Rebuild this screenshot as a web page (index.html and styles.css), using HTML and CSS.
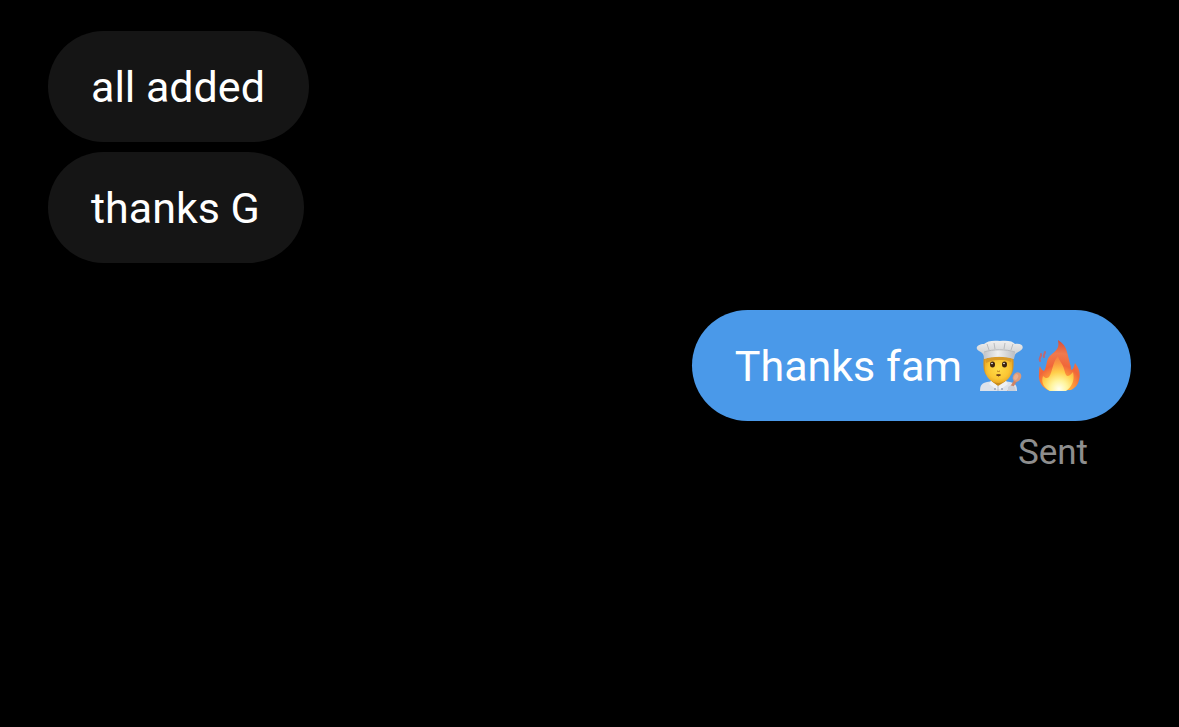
FILE: index.html
```html
<!DOCTYPE html>
<html lang="en">
<head>
<meta charset="utf-8">
<meta name="viewport" content="width=device-width, initial-scale=1">
<title>Messages</title>
<link rel="stylesheet" href="styles.css">
</head>
<body>
<main class="chat">
  <section class="group received">
    <p class="bubble">all added</p>
    <p class="bubble">thanks G</p>
  </section>
  <section class="group sent">
    <p class="bubble">
      <span>Thanks fam</span>
      <span class="emojis">
        <svg class="emoji" viewBox="0 0 48 51" role="img" aria-label="Cook">
          <defs>
            <linearGradient id="hat" x1="0" y1="0" x2="0" y2="1"><stop offset="0" stop-color="#efefef"/><stop offset=".6" stop-color="#d6d7d8"/><stop offset="1" stop-color="#b3b5b9"/></linearGradient>
            <linearGradient id="band" x1="0" y1="0" x2="1" y2="0"><stop offset="0" stop-color="#c4c5c8"/><stop offset=".45" stop-color="#f0f0f0"/><stop offset="1" stop-color="#bcbec2"/></linearGradient>
            <radialGradient id="face" cx=".5" cy=".45" r=".65"><stop offset="0" stop-color="#ffdc48"/><stop offset=".6" stop-color="#fbc633"/><stop offset="1" stop-color="#de971f"/></radialGradient>
          </defs>
          <path d="M5 51c0-6 2-8 7-9l6-1h11l6 1c5 1 7 3 7 9z" fill="#dde2ea"/>
          <path d="M17 38h13v4l-6 5-7-5z" fill="#c98c1c"/>
          <path d="M16 41l7 5 8-5 2 3-7 5h-5l-7-5z" fill="#eef1f5"/>
          <path d="M23 46v5" stroke="#b7bdc8" fill="none"/>
          <g fill="#66748f"><circle cx="20" cy="49" r=".8"/><circle cx="27" cy="49" r=".8"/></g>
          <path d="M9 16h29c1 7 1 14-2 19H11c-3-5-3-12-2-19z" fill="#dc9820"/>
          <path d="M10 17h27v12c0 8-6 14-13.500 14S10 37 10 29z" fill="url(#face)"/>
          <path d="M10 16h27l-1 6c-4-2-8-2-12-2-5 0-9 1-13 3z" fill="#d99a28"/>
          <ellipse cx="17.500" cy="24.500" rx="2.500" ry="3" fill="#3d2411"/>
          <ellipse cx="29.500" cy="24.500" rx="2.500" ry="3" fill="#3d2411"/>
          <circle cx="17" cy="23.500" r=".8" fill="#fff"/><circle cx="29" cy="23.500" r=".8" fill="#fff"/>
          <path d="M22 31q1.500 1 3 0" stroke="#b97a1c" fill="none"/>
          <path d="M21.500 35q2-1 4 0-2 2-4 0z" fill="#704018" stroke="#704018"/>
          <path d="M9 19C9 15 8 13 4 11-1 8 3 4 9 4c3-3 9-4 16-3 7-1 13 0 15 3 8-1 10 4 5 7-4 2-6 4-6 8-9-3-21-3-30 0z" fill="url(#hat)"/>
          <path d="M9 12c9-3 22-3 31 0l-1 7c-9-3-21-3-30 0z" fill="url(#band)"/>
          <path d="M9 12c9-3 22-3 31 0M14 10l-2-6M20 9l-1-6M29 9l1-6M36 10l2-6" fill="none" stroke="#b9bbbe"/>
          <path d="M41 40l-7 11" stroke="#cd8465" stroke-width="3" stroke-linecap="round"/>
          <ellipse cx="42" cy="37" rx="4" ry="5" transform="rotate(30 42 37)" fill="#dc9a79"/>
          <ellipse cx="41" cy="37" rx="2" ry="3" transform="rotate(30 41 37)" fill="#e9ae8e"/>
          <path d="M33 47q3-3 7 0l1 4h-8z" fill="#cbd0d9"/>
        </svg>
        <svg class="emoji" viewBox="0 0 48 51" role="img" aria-label="Fire">
          <defs>
            <radialGradient id="flame" gradientUnits="userSpaceOnUse" cx="24" cy="48" r="46"><stop offset="0" stop-color="#ffdf55"/><stop offset=".3" stop-color="#ff9b3a"/><stop offset=".5" stop-color="#f0663a"/><stop offset=".75" stop-color="#ef7a4c"/><stop offset="1" stop-color="#d9533d"/></radialGradient>
            <radialGradient id="core" gradientUnits="userSpaceOnUse" cx="24" cy="49" r="34"><stop offset="0" stop-color="#fffff0"/><stop offset=".25" stop-color="#fff49b"/><stop offset=".5" stop-color="#ffcf4b"/><stop offset=".75" stop-color="#fb9a40"/><stop offset="1" stop-color="#f07845"/></radialGradient>
          </defs>
          <path d="M15 51C7 48 3 41 4 34c0-3 0-6 1-8 1 3 2 4 4 5 3-5 2-10 5-14 2-3 7-5 9-10 1-3 0-5 0-7 5 3 8 7 9 12 1 4 2 7 3 12 1 2 1 4 1 6 3-1 3-4 4-7 4 5 6 11 4 17-1 5-4 8-8 10z" fill="url(#flame)"/>
          <path d="M15 51c-7-4-9-9-7-15 2 2 4 3 6 1 4-6 3-14 9-21 1 5 5 8 6 13 1 3 1 5 3 7 3 0 4-2 6-4 2 8-1 15-7 19z" fill="url(#core)"/>
          <path d="M5 21c-2-3 2-4 1-7M9 17c-1-2 1-3 1-5" fill="none" stroke="#bd6873" stroke-width="2" stroke-linecap="round"/>
        </svg>
      </span>
    </p>
    <p class="status">Sent</p>
  </section>
</main>
</body>
</html>
```
FILE: styles.css
```css
* {
  box-sizing: border-box;
}

body {
  margin: 0;
  background: #000;
  color: #fff;
  font-family: Roboto, "Liberation Sans", sans-serif;
}

.chat {
  display: flex;
  flex-direction: column;
  gap: 47px;
  min-height: 100vh;
  padding: 31px 48px;
}

.group {
  display: flex;
  flex-direction: column;
  gap: 10px;
}

.received {
  align-items: flex-start;
}

.sent {
  align-items: flex-end;
}

.bubble {
  display: flex;
  align-items: flex-start;
  gap: 13px;
  margin: 0;
  padding: 30px 44px 28px 43px;
  border-radius: 58px;
  background: #151515;
  font-size: 43px;
  line-height: 53px;
}

.sent .bubble {
  background: #4a99e9;
}

.emojis {
  display: flex;
  gap: 12px;
  padding-right: 4px;
}

.emoji {
  display: block;
  width: 48px;
  height: 51px;
}

.status {
  margin: 0;
  padding: 1px 43px 0 0;
  color: #8e8e8e;
  font-size: 35px;
  line-height: 42px;
}
```
